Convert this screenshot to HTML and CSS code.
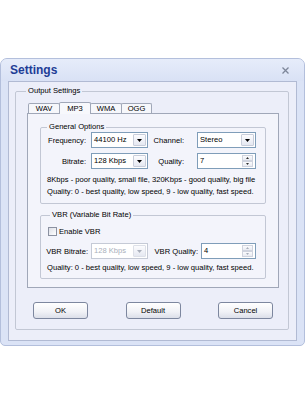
FILE: index.html
```html
<!DOCTYPE html>
<html>
<head>
<meta charset="utf-8">
<link rel="stylesheet" href="styles.css">
</head>
<body>
<div class="window">
  <div class="titlebar">
    <span class="title">Settings</span>
    <svg class="close" width="7" height="7" viewBox="0 0 7 7"><path d="M0.5 0.5L6.5 6.5M6.5 0.5L0.5 6.5" stroke="#7d8699" stroke-width="1.3" fill="none"/></svg>
  </div>
  <div class="panel">
    <fieldset class="group output">
      <legend>Output Settings</legend>
      <div class="tabs">
        <div class="tab">WAV</div>
        <div class="tab active">MP3</div>
        <div class="tab">WMA</div>
        <div class="tab last">OGG</div>
      </div>
      <div class="tabpanel">
        <fieldset class="group general">
          <legend>General Options</legend>
          <div class="grid grid-general">
            <span class="lbl">Frequency:</span>
            <div class="combo"><span class="val">44100 Hz</span><span class="drop"><svg width="5" height="3" viewBox="0 0 5 3"><path d="M0 0H5L2.5 3Z" fill="#000"/></svg></span></div>
            <span class="lbl lbl2">Channel:</span>
            <div class="combo"><span class="val">Stereo</span><span class="drop"><svg width="5" height="3" viewBox="0 0 5 3"><path d="M0 0H5L2.5 3Z" fill="#000"/></svg></span></div>
            <span class="lbl">Bitrate:</span>
            <div class="combo"><span class="val">128 Kbps</span><span class="drop"><svg width="5" height="3" viewBox="0 0 5 3"><path d="M0 0H5L2.5 3Z" fill="#000"/></svg></span></div>
            <span class="lbl lbl2">Quality:</span>
            <div class="spin"><span class="val">7</span><span class="spinbtns"><span class="sb"><svg width="3" height="2" viewBox="0 0 3 2"><path d="M0 2H3L1.5 0Z" fill="#333"/></svg></span><span class="sb"><svg width="3" height="2" viewBox="0 0 3 2"><path d="M0 0H3L1.5 2Z" fill="#333"/></svg></span></span></div>
          </div>
          <p class="note">8Kbps - poor quality, small file, 320Kbps - good quality, big file<br>Quality: 0 - best quality, low speed, 9 - low quality, fast speed.</p>
        </fieldset>
        <fieldset class="group vbr">
          <legend>VBR (Variable Bit Rate)</legend>
          <label class="check"><span class="box"></span>Enable VBR</label>
          <div class="grid grid-vbr">
            <span class="lbl">VBR Bitrate:</span>
            <div class="combo disabled"><span class="val">128 Kbps</span><span class="drop"><svg width="5" height="3" viewBox="0 0 5 3"><path d="M0 0H5L2.5 3Z" fill="#a9afbb"/></svg></span></div>
            <span class="lbl">VBR Quality:</span>
            <div class="spin"><span class="val">4</span><span class="spinbtns"><span class="sb"><svg width="3" height="2" viewBox="0 0 3 2"><path d="M0 2H3L1.5 0Z" fill="#a9afbb"/></svg></span><span class="sb"><svg width="3" height="2" viewBox="0 0 3 2"><path d="M0 0H3L1.5 2Z" fill="#a9afbb"/></svg></span></span></div>
          </div>
          <p class="note">Quality: 0 - best quality, low speed, 9 - low quality, fast speed.</p>
        </fieldset>
      </div>
      <div class="buttons">
        <button class="btn">OK</button>
        <button class="btn">Default</button>
        <button class="btn">Cancel</button>
      </div>
    </fieldset>
  </div>
</div>
</body>
</html>
```
FILE: styles.css
```css
html, body {
  margin: 0;
  padding: 0;
  background: #ffffff;
}
body {
  width: 305px;
  height: 405px;
  overflow: hidden;
  font-family: "Liberation Sans", Arial, sans-serif;
  font-size: 7.6px;
  color: #000;
}
.window {
  margin-top: 58px;
  width: 305px;
  height: 288px;
  box-sizing: border-box;
  border: 1px solid #b3bfdc;
  border-radius: 7px 7px 5px 5px;
  background: #dbe3f6;
}
.titlebar {
  height: 22px;
  display: flex;
  align-items: center;
  justify-content: space-between;
  padding: 0 15px 0 9px;
  background: linear-gradient(#e6ecfa, #d9e1f5);
  border-radius: 6px 6px 0 0;
}
.title {
  font-size: 12px;
  font-weight: bold;
  color: #1e3d96;
}
.close {
  display: block;
}
.panel {
  margin: 0 7px;
  border: 1px solid #b1bad3;
  background: #eceef9;
  padding: 4px 7px 10px 6px;
}
.group {
  margin: 0;
  border: 1px solid #c2c7d4;
  border-radius: 2px;
  min-width: 0;
  color: #000;
}
.group legend {
  padding: 0 2px;
  line-height: 10px;
  height: 10px;
}
.output {
  padding: 6px 9px 10px 11px;
}
.output > legend {
  margin-left: -1px;
}
.tabs {
  display: flex;
  align-items: flex-end;
  padding-left: 1px;
}
.tab {
  width: 32px;
  height: 10px;
  box-sizing: border-box;
  border: 1px solid #a0a7b8;
  border-bottom: none;
  border-radius: 2px 2px 0 0;
  background: #f6f7fb;
  line-height: 10px;
  text-align: center;
  margin-left: -1px;
}
.tab:first-child {
  margin-left: 0;
}
.tab.last {
  width: 31px;
}
.tab.active {
  height: 12px;
  margin-bottom: -1px;
  background: #f7f8fc;
  line-height: 11px;
  position: relative;
  z-index: 1;
}
.tabpanel {
  border: 1px solid #a0a7b8;
  background: #f3f4fb;
  padding: 8px 12px 8px 12px;
}
.general, .vbr {
  padding: 0 6px 5px 6px;
}
.vbr {
  margin-top: 6px;
  padding-top: 5px;
  padding-bottom: 4px;
}
.vbr > legend {
  margin-left: 3px;
}
.grid {
  display: grid;
  column-gap: 3px;
  row-gap: 5px;
  align-items: center;
}
.grid-general {
  grid-template-columns: 41px 57px 43px 59px;
}
.grid-vbr {
  grid-template-columns: 43px 57px 47px 55px;
  margin: 6px 0 0 -2px;
}
.lbl {
  text-align: right;
  white-space: nowrap;
  padding-right: 2px;
  color: #000;
}
.grid-general .lbl2 {
  padding-right: 10px;
}
.grid-vbr .lbl {
  padding-right: 0;
}
.combo, .spin {
  display: flex;
  height: 16px;
  box-sizing: border-box;
  border: 1px solid #7f9db9;
  background: #fff;
}
.val {
  flex: 1;
  padding-left: 2px;
  line-height: 14px;
  white-space: nowrap;
  overflow: hidden;
  color: #000;
}
.drop {
  width: 13px;
  margin: 1px;
  box-sizing: border-box;
  border: 1px solid #c8cdda;
  border-radius: 1px;
  background: linear-gradient(#fcfcfe, #e5e8f1);
  display: flex;
  align-items: center;
  justify-content: center;
}
.combo.disabled {
  border-color: #c5cad6;
}
.combo.disabled .val {
  color: #a9afbb;
}
.combo.disabled .drop {
  border-color: #dde0e8;
}
.spinbtns {
  width: 11px;
  margin: 1px 2px 1px 0;
  display: flex;
  flex-direction: column;
}
.sb {
  flex: 1;
  box-sizing: border-box;
  border: 1px solid #cfd3de;
  background: linear-gradient(#fbfbfd, #e9ebf2);
  display: flex;
  align-items: center;
  justify-content: center;
}
.sb svg {
  display: block;
}
.note {
  margin: 5px 0 0 0;
  line-height: 12px;
  white-space: nowrap;
  color: #000;
}
.vbr .note {
  margin-top: 3px;
}
.check {
  display: flex;
  align-items: center;
  height: 12px;
}
.box {
  width: 9px;
  height: 9px;
  box-sizing: border-box;
  border: 1px solid #8b91a1;
  background: linear-gradient(135deg, #dcdfe7, #ffffff);
  margin: 0 2px 0 1px;
}
.buttons {
  display: flex;
  justify-content: space-between;
  margin: 14px 6px 0 6px;
}
.btn {
  width: 55px;
  height: 17px;
  box-sizing: border-box;
  padding: 0;
  border: 1px solid #7d879f;
  border-radius: 3px;
  background: linear-gradient(#ffffff, #f0f1f6 60%, #dcdfe9);
  font-family: inherit;
  font-size: 7.6px;
  color: #000;
}
```
